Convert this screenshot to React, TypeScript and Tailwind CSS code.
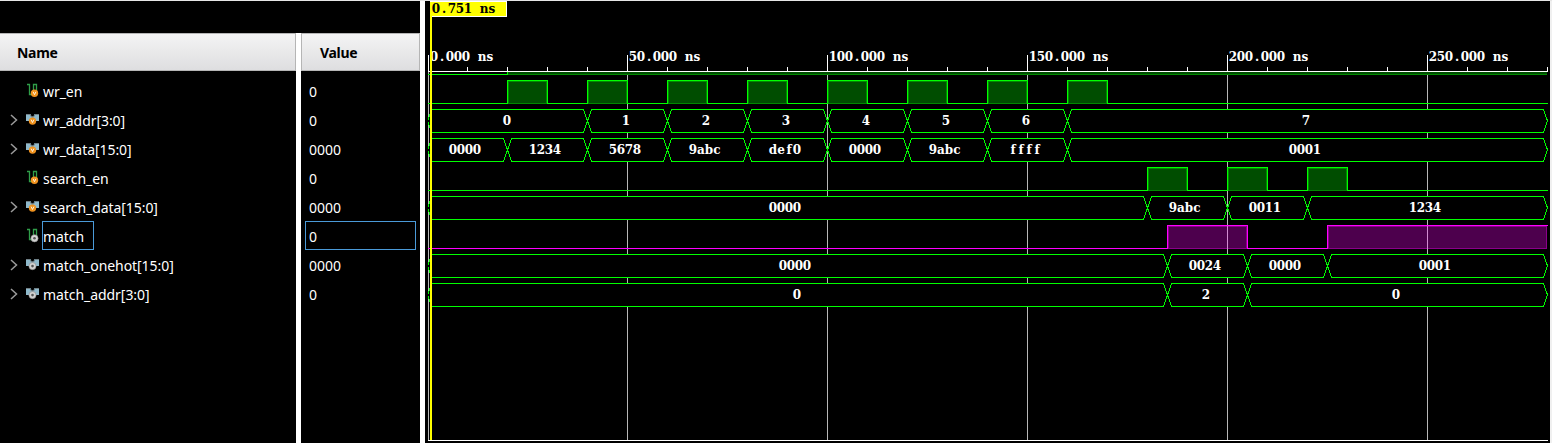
import React from "react";

type Kind = "bit" | "bus";
interface Signal {
  name: string;
  value: string;
  kind: Kind;
  output?: boolean;
  selected?: boolean;
  high?: [number, number][];
  segments?: [number, string][];
}

const END = 280;

const signals: Signal[] = [
  { name: "wr_en", value: "0", kind: "bit", high: [[20, 30], [40, 50], [60, 70], [80, 90], [100, 110], [120, 130], [140, 150], [160, 170]] },
  { name: "wr_addr[3:0]", value: "0", kind: "bus", segments: [[0, "0"], [40, "1"], [60, "2"], [80, "3"], [100, "4"], [120, "5"], [140, "6"], [160, "7"]] },
  { name: "wr_data[15:0]", value: "0000", kind: "bus", segments: [[0, "0000"], [20, "1234"], [40, "5678"], [60, "9abc"], [80, "def0"], [100, "0000"], [120, "9abc"], [140, "ffff"], [160, "0001"]] },
  { name: "search_en", value: "0", kind: "bit", high: [[180, 190], [200, 210], [220, 230]] },
  { name: "search_data[15:0]", value: "0000", kind: "bus", segments: [[0, "0000"], [180, "9abc"], [200, "0011"], [220, "1234"]] },
  { name: "match", value: "0", kind: "bit", output: true, selected: true, high: [[185, 205], [225, 280]] },
  { name: "match_onehot[15:0]", value: "0000", kind: "bus", output: true, segments: [[0, "0000"], [185, "0024"], [205, "0000"], [225, "0001"]] },
  { name: "match_addr[3:0]", value: "0", kind: "bus", output: true, segments: [[0, "0"], [185, "2"], [205, "0"]] },
];

// The canvas starts 425px from the window's left edge; one ns is 4px.
const px = (t: number) => 2 + t * 4;

function Badge({ output, cx, cy }: { output?: boolean; cx: number; cy: number }) {
  return output ? (
    <g>
      <circle cx={cx} cy={cy} r="3.6" fill="#d2d2d2" stroke="#8c8c8c" strokeWidth="0.6" />
      <circle cx={cx} cy={cy} r="1.3" fill="#555555" />
    </g>
  ) : (
    <g>
      <circle cx={cx} cy={cy} r="3.7" fill="#f0921e" />
      <path d={`M${cx - 1.4} ${cy - 1.5}L${cx} ${cy + 1.4}L${cx + 1.4} ${cy - 1.5}`} fill="none" stroke="#fff3dc" strokeWidth="1" />
    </g>
  );
}

function SignalIcon({ kind, output }: { kind: Kind; output?: boolean }) {
  return (
    <svg width="16" height="16" viewBox="0 0 16 16" className="shrink-0">
      {kind === "bit" ? (
        <>
          <path d="M2 1.5H4.5V11.5H8.5V1.5H11.5V8" fill="none" stroke="#2f9e49" strokeWidth="1.3" />
          <Badge output={output} cx={9.5} cy={10.3} />
        </>
      ) : (
        <>
          <path d="M1 2H14V9H11L10 11H5L4 9H1Z" fill="#8fb9cb" />
          <path d="M5.5 2H9.5L8.5 4.5H6.5Z" fill="#000" />
          <path d="M1 2.5H5L6.5 5H8.5L10 2.5H14" fill="none" stroke="#6f7f86" strokeWidth="1" />
          <Badge output={output} cx={7.5} cy={9.1} />
        </>
      )}
    </svg>
  );
}

function MonoText({ x, y, text, fill = "#fff" }: { x: number; y: number; text: string; fill?: string }) {
  const xs = text.split("").map((_, i) => x + 4 + i * 8).join(" ");
  return (
    <text x={xs} y={y} fill={fill} textAnchor="middle" className="font-['DejaVu_Serif',serif] text-[12px] font-bold">
      {text}
    </text>
  );
}

function BitTrace({ high, top, output }: { high: [number, number][]; top: number; output?: boolean }) {
  const bright = output ? "#ff00ff" : "#00ff00";
  const mid = output ? "#8b008b" : "#008a00";
  const dark = output ? "#4d004d" : "#004d00";
  const bottom = top + 23;
  let line = `M3 ${bottom + 0.5}`;
  high.forEach(([a, b]) => {
    const xa = px(a) + 0.5;
    line += `H${xa}V${top + 0.5}`;
    line += b >= END ? `H${px(b) + 1}` : `H${px(b) + 0.5}V${bottom + 0.5}`;
  });
  if (high[high.length - 1][1] < END) line += `H${px(END) + 1}`;
  return (
    <g>
      {high.map(([a, b]) => (
        <rect key={a} x={px(a) + 1.5} y={top + 1.5} width={px(b) - px(a) - 2} height={22} fill={dark} stroke={mid} />
      ))}
      <path d={line} fill="none" stroke={bright} />
      {high.map(([a, b]) => (
        <path key={a} d={`M${px(a) + 1} ${bottom + 0.5}H${px(b)}`} stroke={mid} />
      ))}
      {high.map(([a, b]) =>
        [50, 100, 150, 200, 250]
          .filter((t) => t > a && t < b)
          .map((t) => <path key={t} d={`M${px(t) + 0.5} ${top + 1}V${bottom + 1}`} stroke="#d28cd2" />),
      )}
    </g>
  );
}

function BusTrace({ segments, top }: { segments: [number, string][]; top: number }) {
  const bottom = top + 23.5;
  const y = top + 0.5;
  const m = top + 12;
  return (
    <g>
      {segments.map(([a, text], i) => {
        const b = i + 1 < segments.length ? segments[i + 1][0] : END;
        const x0 = px(a) + 0.5;
        const x1 = px(b) + 0.5;
        const center = (px(a) + px(b)) / 2;
        const start = text.length > 1 ? center - 18 : center - (a === 0 ? 4 : 5);
        return (
          <g key={a}>
            <path d={`M${x0} ${m}L${x0 + 4} ${y}H${x1 - 4}L${x1} ${m}L${x1 - 4} ${bottom}H${x0 + 4}Z`} fill="#000" stroke="#00ff00" />
            <MonoText x={start} y={top + 16} text={text} />
          </g>
        );
      })}
    </g>
  );
}

function Waveform() {
  const majors = [0, 50, 100, 150, 200, 250];
  const ticks = Array.from({ length: 29 }, (_, i) => i * 10);
  return (
    <svg width="1125" height="442" viewBox="0 1 1125 442" className="block bg-black" shapeRendering="crispEdges">
      <defs>
        <clipPath id="canvas">
          <rect x="3" y="0" width="1120" height="443" />
        </clipPath>
      </defs>
      {majors.map((t) => {
        const x = t === 0 ? 3.5 : px(t) + 0.5;
        return (
          <g key={t}>
            <path d={`M${x} 72V440`} stroke="#b8b8b8" />
            <path d={`M${x} 55V72`} stroke="#fff" />
            <MonoText x={t === 0 ? 5 : px(t) + 2} y={61} text={`${t}.000 ns`} />
          </g>
        );
      })}
      <g clipPath="url(#canvas)">
        <rect x={px(20)} y="72" width={px(END) - px(20)} height="3" fill="#004d00" />
        <path d={`M${px(20)} 74.5H${px(END)}`} stroke="#008a00" />
        <path d={`M3 74.5H${px(20) + 0.5}V72`} fill="none" stroke="#00ff00" />
        {signals.map((s, i) =>
          s.kind === "bit" ? (
            <BitTrace key={s.name} high={s.high ?? []} top={80 + i * 29} output={s.output} />
          ) : (
            <BusTrace key={s.name} segments={s.segments ?? []} top={80 + i * 29} />
          ),
        )}
      </g>
      <path d="M3 71.5H1123M3 440.5H1123" stroke="#fff" />
      {ticks.slice(1).map((t) => (
        <path key={t} d={`M${px(t) + 0.5} 67V72`} stroke="#fff" />
      ))}
      <rect x="5" y="1" width="2" height="439" fill="#ffff00" />
      <rect x="5" y="1" width="77" height="16" fill="#fff" />
      <rect x="6" y="2" width="75" height="14" fill="#ffff00" />
      <rect x="5" y="2" width="2" height="15" fill="#ffff00" />
      <MonoText x={7} y={13} text="0.751 ns" fill="#000" />
    </svg>
  );
}

function Header({ children, className }: { children: string; className: string }) {
  return (
    <div className={`flex h-[38px] shrink-0 items-center border-t border-b border-[#b5b5b5] bg-linear-to-b from-[#f4f4f4] to-[#dedee0] text-[14px] font-bold tracking-[-0.3px] text-black ${className}`}>
      {children}
    </div>
  );
}

export default function App() {
  return (
    <div className="flex h-[443px] w-[1552px] overflow-hidden border-t border-[#e6e6e6] bg-black font-['Noto_Sans','Open_Sans',sans-serif] text-[14px] text-white">
      <div className="flex w-[420px] shrink-0 flex-col">
        <div className="h-8 shrink-0" />
        <div className="flex flex-1 gap-[5px] bg-white">
          <div className="flex w-[296px] flex-col bg-black">
            <Header className="border-r pl-[17px]">Name</Header>
            <div className="flex flex-col pt-[5px]">
              {signals.map((s) => (
                <div key={s.name} className="flex h-[29px]">
                  <div className="flex w-[25px] shrink-0 pt-[9px] pl-[9px]">
                    {s.kind === "bus" && (
                      <svg width="10" height="12" viewBox="0 0 10 12">
                        <path d="M2 1L7.5 6L2 11" fill="none" stroke="#9a9a9a" strokeWidth="1.5" />
                      </svg>
                    )}
                  </div>
                  <div className="pt-[7px]">
                    <SignalIcon kind={s.kind} output={s.output} />
                  </div>
                  <div className={`ml-px flex h-[29px] items-center border pt-[2px] pr-[9px] tracking-[-0.06px] ${s.selected ? "border-[#4a9ad8]" : "border-transparent"}`}>
                    {s.name}
                  </div>
                </div>
              ))}
            </div>
          </div>
          <div className="flex w-[119px] flex-col bg-black">
            <Header className="border-r border-l pl-[18px]">Value</Header>
            <div className="flex flex-col pt-[5px] pr-1 pl-1">
              {signals.map((s) => (
                <div key={s.name} className={`flex h-[29px] items-center border pt-[2px] pl-[3px] ${s.selected ? "border-[#4a9ad8]" : "border-transparent"}`}>
                  {s.value}
                </div>
              ))}
            </div>
          </div>
        </div>
      </div>
      <div className="w-[5px] shrink-0 bg-white" />
      <Waveform />
      <div className="flex-1 bg-[#f0f0f0]" />
    </div>
  );
}
